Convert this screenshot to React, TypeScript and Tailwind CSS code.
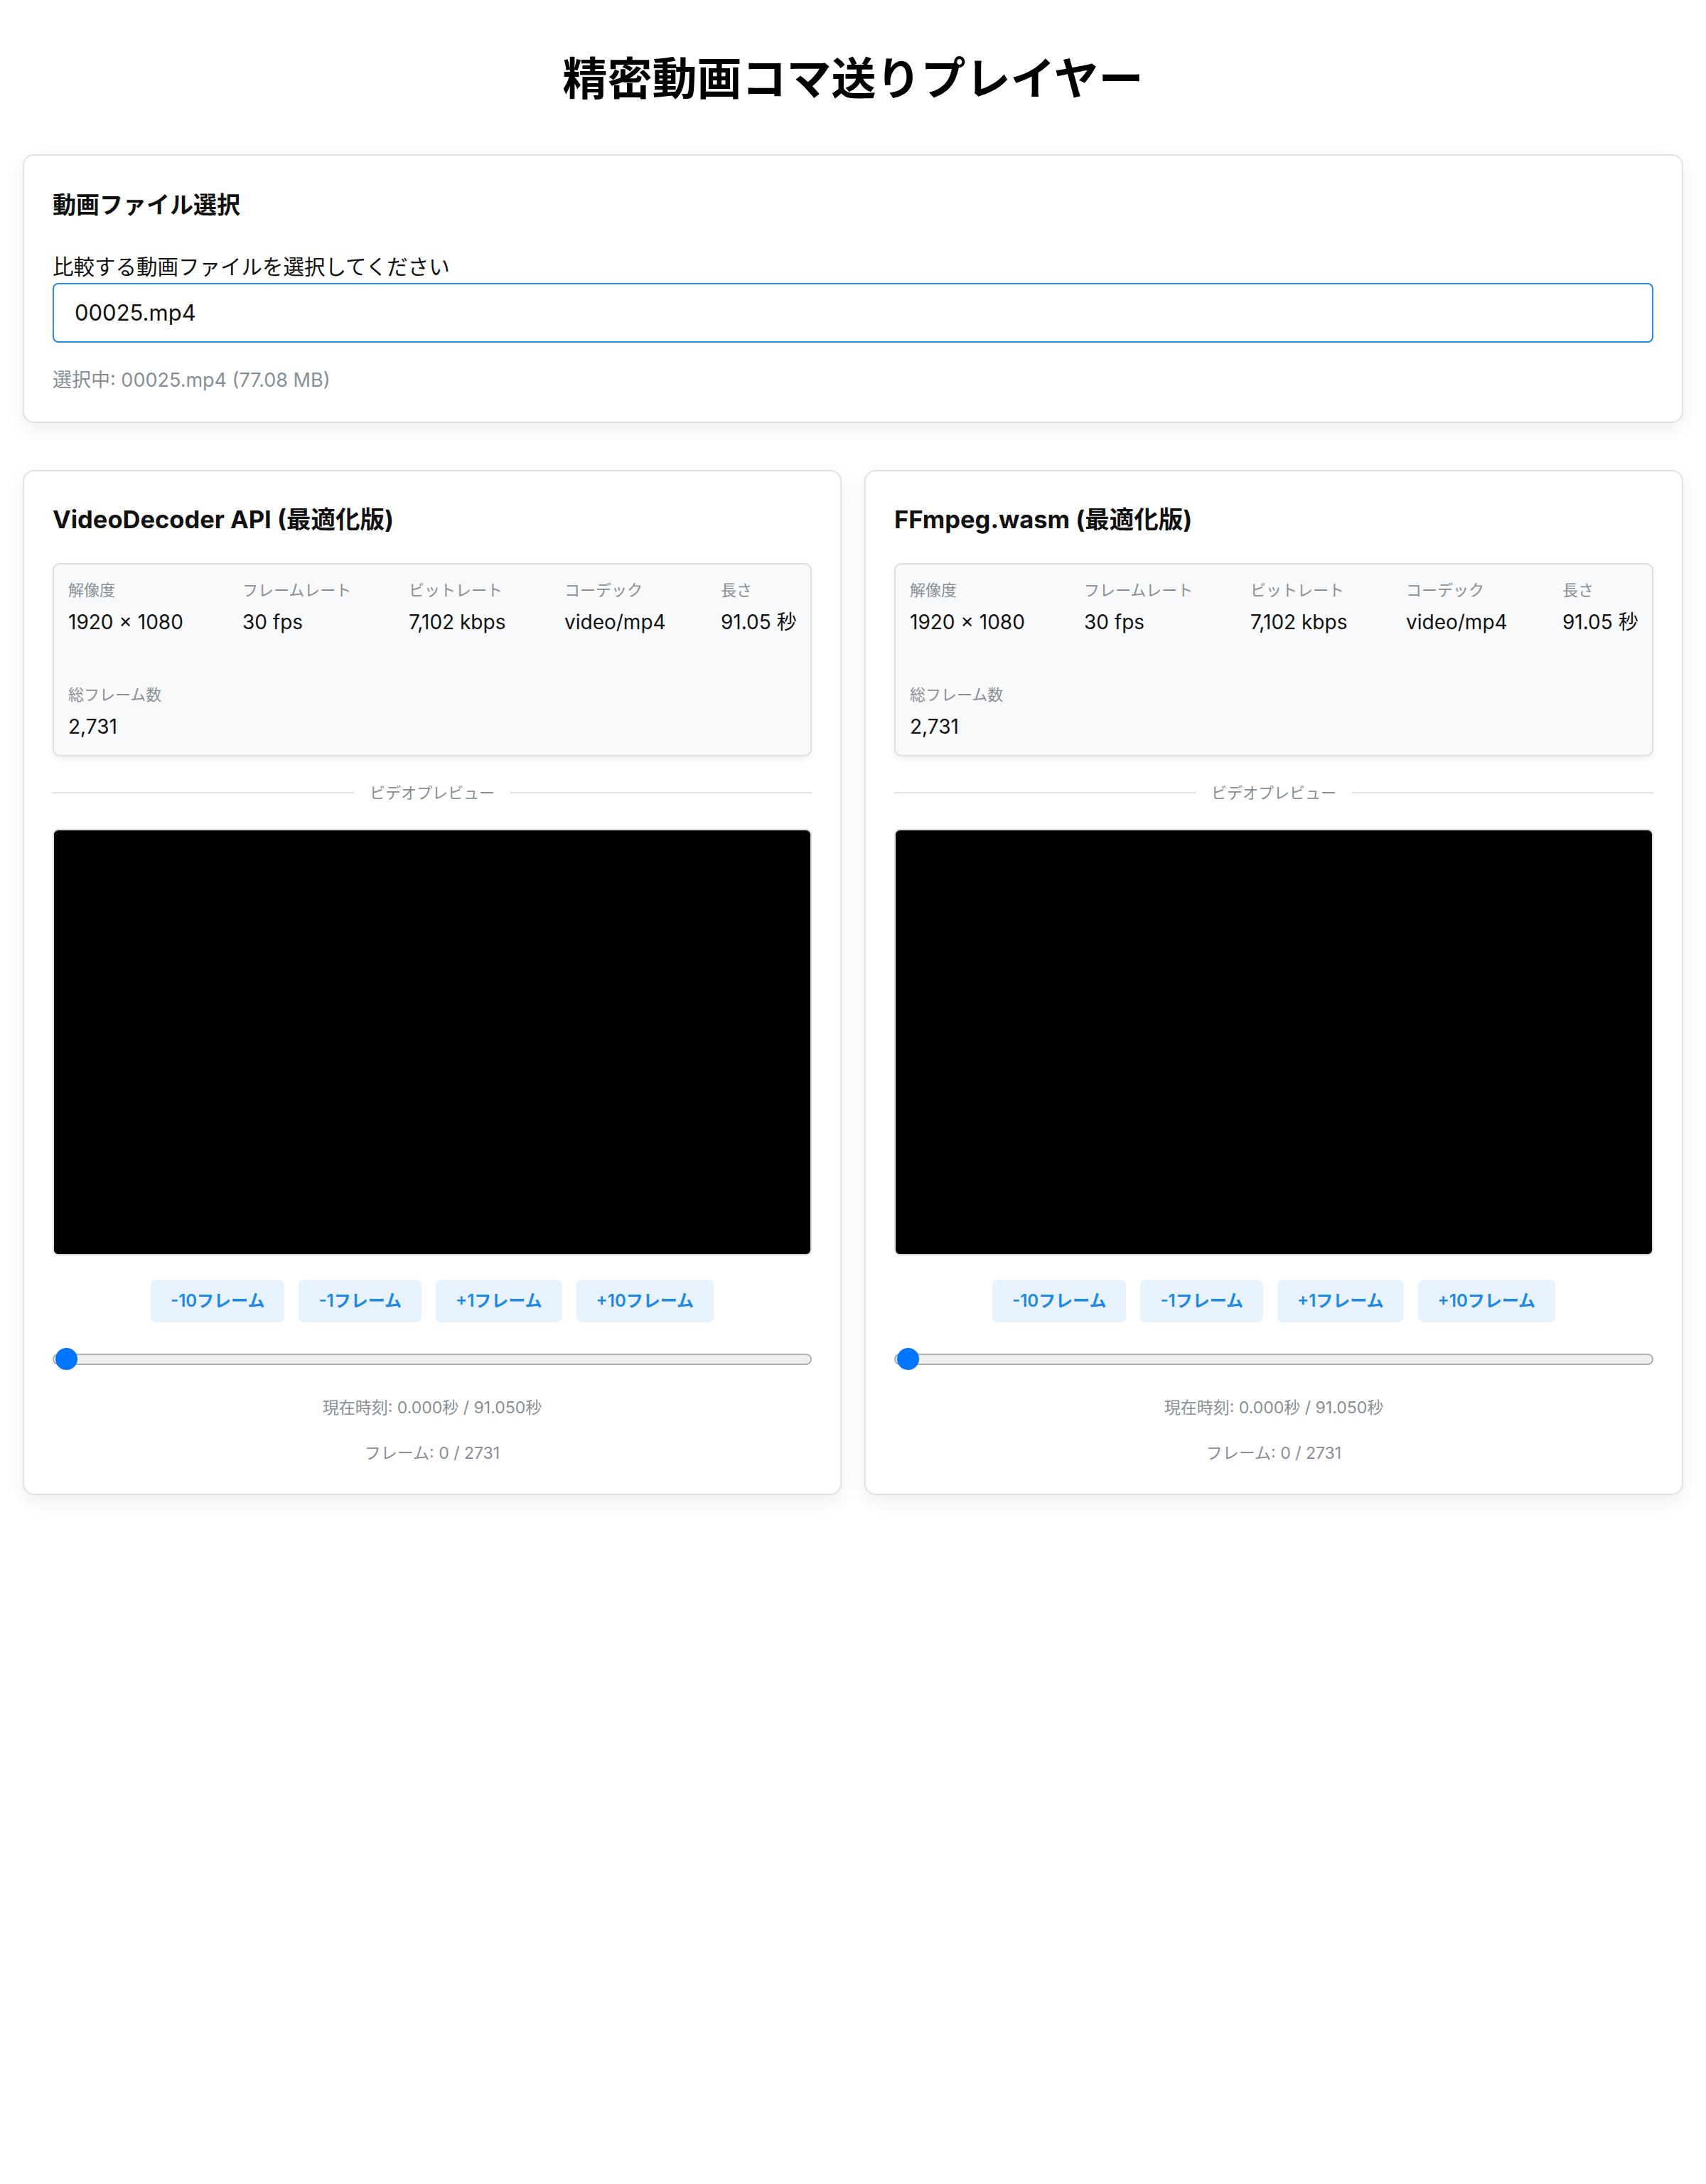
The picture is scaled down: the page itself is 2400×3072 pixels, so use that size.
import React from "react";

const info = [
  { label: "解像度", value: "1920 × 1080" },
  { label: "フレームレート", value: "30 fps" },
  { label: "ビットレート", value: "7,102 kbps" },
  { label: "コーデック", value: "video/mp4" },
  { label: "長さ", value: "91.05 秒" },
  { label: "総フレーム数", value: "2,731" },
];

const buttons = ["-10フレーム", "-1フレーム", "+1フレーム", "+10フレーム"];

function PlayerCard({ title }: { title: string }) {
  return (
    <section className="rounded-[16px] border-2 border-[#dee2e6] bg-white px-[40px] pt-[40px] pb-[41px] shadow-[0_8px_28px_rgba(0,0,0,0.07)]">
      <h2 className="text-[34.5px] font-bold leading-[56px] text-[#111]">{title}</h2>
      <div className="mt-[33px] rounded-[10px] border-2 border-[#dee2e6] bg-[#f8f9fa] p-[20px] shadow-[0_4px_10px_rgba(0,0,0,0.06)]">
        <div className="grid grid-cols-[245px_234px_219px_220px_1fr] gap-y-[66px]">
          {info.map((it) => (
            <div key={it.label} className="whitespace-nowrap">
              <div className="text-[22px] leading-[32px] text-[#868e96]">{it.label}</div>
              <div className="mt-[9px] text-[28px] leading-[40px] text-[#111]">{it.value}</div>
            </div>
          ))}
        </div>
      </div>
      <div className="mt-[35px] flex items-center gap-[22px]">
        <div className="h-[2px] flex-1 bg-[#dee2e6]" />
        <span className="text-[22px] leading-[32px] text-[#868e96]">ビデオプレビュー</span>
        <div className="h-[2px] flex-1 bg-[#dee2e6]" />
      </div>
      <div className="mt-[35px] h-[600px] rounded-[8px] border-2 border-[#dcdcdc] bg-black" />
      <div className="mt-[34px] flex justify-center gap-[20px]">
        {buttons.map((b) => (
          <button
            key={b}
            className="h-[60px] rounded-[8px] bg-[#e7f2fc] px-[28px] text-[24px] font-semibold text-[#1e88e5]"
          >
            {b}
          </button>
        ))}
      </div>
      <div className="relative mt-[36px] flex h-[32px] items-center">
        <div className="h-[16px] w-full rounded-full border-2 border-[#b0b0b0] bg-[#efefef]" />
        <div className="absolute left-[4px] top-0 h-[31px] w-[31px] rounded-full bg-[#0075ff]" />
      </div>
      <p className="mt-[36px] text-center text-[23px] leading-[32px] text-[#868e96]">
        現在時刻: 0.000秒 / 91.050秒
      </p>
      <p className="mt-[32px] text-center text-[23px] leading-[32px] text-[#868e96]">
        フレーム: 0 / 2731
      </p>
    </section>
  );
}

export default function App() {
  return (
    <div className="min-h-[3072px] bg-white px-[32px] pt-[70px] font-[Inter,'Noto_Sans_CJK_JP',sans-serif] text-[#111]">
      <h1 className="text-center text-[63px] font-bold leading-[80px] text-black">
        精密動画コマ送りプレイヤー
      </h1>
      <section className="mt-[67px] rounded-[16px] border-2 border-[#dee2e6] bg-white px-[40px] pt-[40px] pb-[40px] shadow-[0_8px_28px_rgba(0,0,0,0.07)]">
        <h3 className="text-[33px] font-bold leading-[58px] text-[#111]">動画ファイル選択</h3>
        <label className="mt-[36px] block text-[29.5px] leading-[45px] text-[#111]">
          比較する動画ファイルを選択してください
        </label>
        <div className="flex h-[84px] items-center rounded-[8px] border-2 border-[#2a8ae0] px-[29px] text-[31px] text-[#111]">
          00025.mp4
        </div>
        <p className="mt-[35px] text-[27px] leading-[36px] text-[#868e96]">
          選択中: 00025.mp4 (77.08 MB)
        </p>
      </section>
      <div className="mt-[66px] grid grid-cols-2 gap-[32px]">
        <PlayerCard title="VideoDecoder API (最適化版)" />
        <PlayerCard title="FFmpeg.wasm (最適化版)" />
      </div>
    </div>
  );
}
